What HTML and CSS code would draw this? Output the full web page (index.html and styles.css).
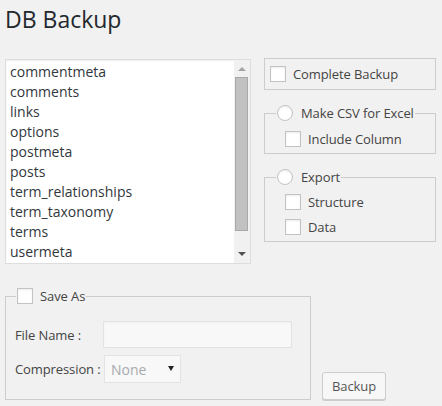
FILE: index.html
```html
<!DOCTYPE html>
<html lang="en">
<head>
<meta charset="utf-8">
<title>DB Backup</title>
<link rel="stylesheet" href="styles.css">
</head>
<body>
<div class="wrap">
  <h1 class="page-title">DB Backup</h1>

  <div class="top-row">
    <div class="table-list">
      <ul class="table-items">
        <li>commentmeta</li>
        <li>comments</li>
        <li>links</li>
        <li>options</li>
        <li>postmeta</li>
        <li>posts</li>
        <li>term_relationships</li>
        <li>term_taxonomy</li>
        <li>terms</li>
        <li>usermeta</li>
      </ul>
      <div class="scrollbar">
        <span class="arrow arrow-up"></span>
        <span class="thumb"></span>
        <span class="arrow arrow-down"></span>
      </div>
    </div>

    <div class="options">
      <label class="complete-box"><input type="checkbox" class="check">Complete Backup</label>

      <fieldset class="group">
        <legend><label class="legend-label radio-label"><input type="radio" name="mode" class="radio">Make CSV for Excel</label></legend>
        <div class="rows">
          <label class="row"><input type="checkbox" class="check">Include Column</label>
        </div>
      </fieldset>

      <fieldset class="group">
        <legend><label class="legend-label radio-label"><input type="radio" name="mode" class="radio">Export</label></legend>
        <div class="rows">
          <label class="row"><input type="checkbox" class="check">Structure</label>
          <label class="row"><input type="checkbox" class="check">Data</label>
        </div>
      </fieldset>
    </div>
  </div>

  <div class="bottom-row">
    <fieldset class="save-as">
      <legend><label class="legend-label"><input type="checkbox" class="check">Save As</label></legend>
      <div class="fields">
        <div class="field">
          <label class="field-label" for="file-name">File Name :</label>
          <input type="text" id="file-name" class="text-input" disabled>
        </div>
        <div class="field field-select">
          <label class="field-label" for="compression">Compression :</label>
          <span class="select-wrap">
            <select id="compression" class="select" disabled>
              <option>None</option>
            </select>
          </span>
        </div>
      </div>
    </fieldset>
    <button type="button" class="button">Backup</button>
  </div>
</div>
</body>
</html>
```

FILE: styles.css
```css
* {
  box-sizing: border-box;
}

html,
body {
  margin: 0;
  background: #f1f1f1;
}

body {
  width: 442px;
  height: 406px;
  overflow: hidden;
  font-family: "Open Sans", "DejaVu Sans", sans-serif;
  font-size: 13px;
  letter-spacing: -0.1px;
  color: #444;
}

.wrap {
  padding-left: 5px;
}

.page-title {
  margin: 5px 0 0;
  font-size: 23px;
  font-weight: 400;
  line-height: 29px;
  letter-spacing: 0;
  color: #23282d;
}

/* ---- table list + options ---- */
.top-row {
  display: flex;
  align-items: flex-start;
  margin-top: 24px;
}

.table-list {
  display: flex;
  width: 246px;
  height: 205px;
  margin-top: 1px;
  border: 1px solid #ddd;
  background: #fff;
  box-shadow: inset 0 1px 2px rgba(0, 0, 0, 0.07);
}

.table-items {
  flex: 1;
  margin: 0;
  padding: 2px 0 0 4px;
  list-style: none;
  font-size: 14px;
  line-height: 20px;
  letter-spacing: 0;
  color: #32373c;
  overflow: hidden;
}

.scrollbar {
  display: flex;
  flex-direction: column;
  align-items: center;
  width: 16px;
  background: #f1f1f1;
}

.arrow {
  width: 0;
  height: 0;
  border-left: 4px solid transparent;
  border-right: 4px solid transparent;
}

.arrow-up {
  margin-top: 7px;
  border-bottom: 4px solid #a3a3a3;
}

.thumb {
  width: 13px;
  height: 154px;
  margin: 6px 1px 0 0;
  background: #c1c1c1;
  border: 1px solid #a9a9a9;
}

.arrow-down {
  margin-top: 21px;
  border-top: 4px solid #505050;
}

.options {
  display: flex;
  flex-direction: column;
  width: 172px;
  margin-left: 13px;
}

.complete-box {
  display: flex;
  align-items: center;
  gap: 7px;
  height: 32px;
  padding-left: 5px;
  border: 1px solid #ccc;
}

.group {
  margin: 15px 0 0;
  padding: 0 4px 4px 11px;
  border: 1px solid #ccc;
  min-width: 0;
}

.group legend,
.save-as legend {
  padding: 0 1px;
}

.legend-label {
  display: flex;
  align-items: center;
  gap: 7px;
  height: 16px;
  line-height: 16px;
}

.radio-label {
  gap: 8px;
}

.rows {
  display: flex;
  flex-direction: column;
  gap: 5px;
  padding-top: 7px;
}

.row {
  display: flex;
  align-items: center;
  gap: 7px;
  height: 20px;
  padding-left: 9px;
}

.group:first-of-type .rows {
  padding-top: 8px;
}

/* ---- form controls ---- */
.check,
.radio {
  -webkit-appearance: none;
  appearance: none;
  flex: none;
  width: 16px;
  height: 16px;
  margin: 0;
  background: #fff;
  border: 1px solid #c3c3c3;
  box-shadow: inset 0 1px 2px rgba(0, 0, 0, 0.08);
}

.radio {
  border-radius: 50%;
}

/* ---- save as ---- */
.bottom-row {
  display: flex;
  align-items: flex-end;
  margin-top: 24px;
}

.save-as {
  width: 306px;
  margin: 0;
  padding: 0 4px 16px 10px;
  border: 1px solid #ccc;
  min-width: 0;
}

.fields {
  display: flex;
  flex-direction: column;
  gap: 7px;
  padding-top: 17px;
}

.field {
  display: flex;
  align-items: center;
}

.field-label {
  width: 88px;
  margin-left: -1px;
}

.text-input {
  width: 189px;
  height: 27px;
  margin: 0;
  padding: 0 6px;
  background: #f8f8f8;
  border: 1px solid #e3e3e3;
  box-shadow: inset 0 1px 2px rgba(0, 0, 0, 0.04);
  font: inherit;
}

.select-wrap {
  position: relative;
  margin-left: 1px;
}

.select {
  -webkit-appearance: none;
  appearance: none;
  display: block;
  width: 77px;
  height: 28px;
  margin: 0;
  padding: 0 0 0 6px;
  background: #f8f8f8;
  border: 1px solid #e3e3e3;
  border-radius: 0;
  font-family: inherit;
  font-size: 14px;
  letter-spacing: 0;
  color: #a7aaad;
  opacity: 1;
}

/* dropdown caret drawn over the select */
.select-wrap::after {
  content: "";
  position: absolute;
  right: 7px;
  top: 11px;
  width: 0;
  height: 0;
  border-left: 3px solid transparent;
  border-right: 3px solid transparent;
  border-top: 5px solid #222;
}

.button {
  height: 28px;
  margin: 0 0 0 11px;
  padding: 0 9px 1px;
  background: #f7f7f7;
  border: 1px solid #ccc;
  border-radius: 3px;
  box-shadow: 0 1px 0 #ccc;
  font-family: inherit;
  font-size: 13px;
  line-height: 26px;
  letter-spacing: -0.1px;
  color: #555;
}
```
